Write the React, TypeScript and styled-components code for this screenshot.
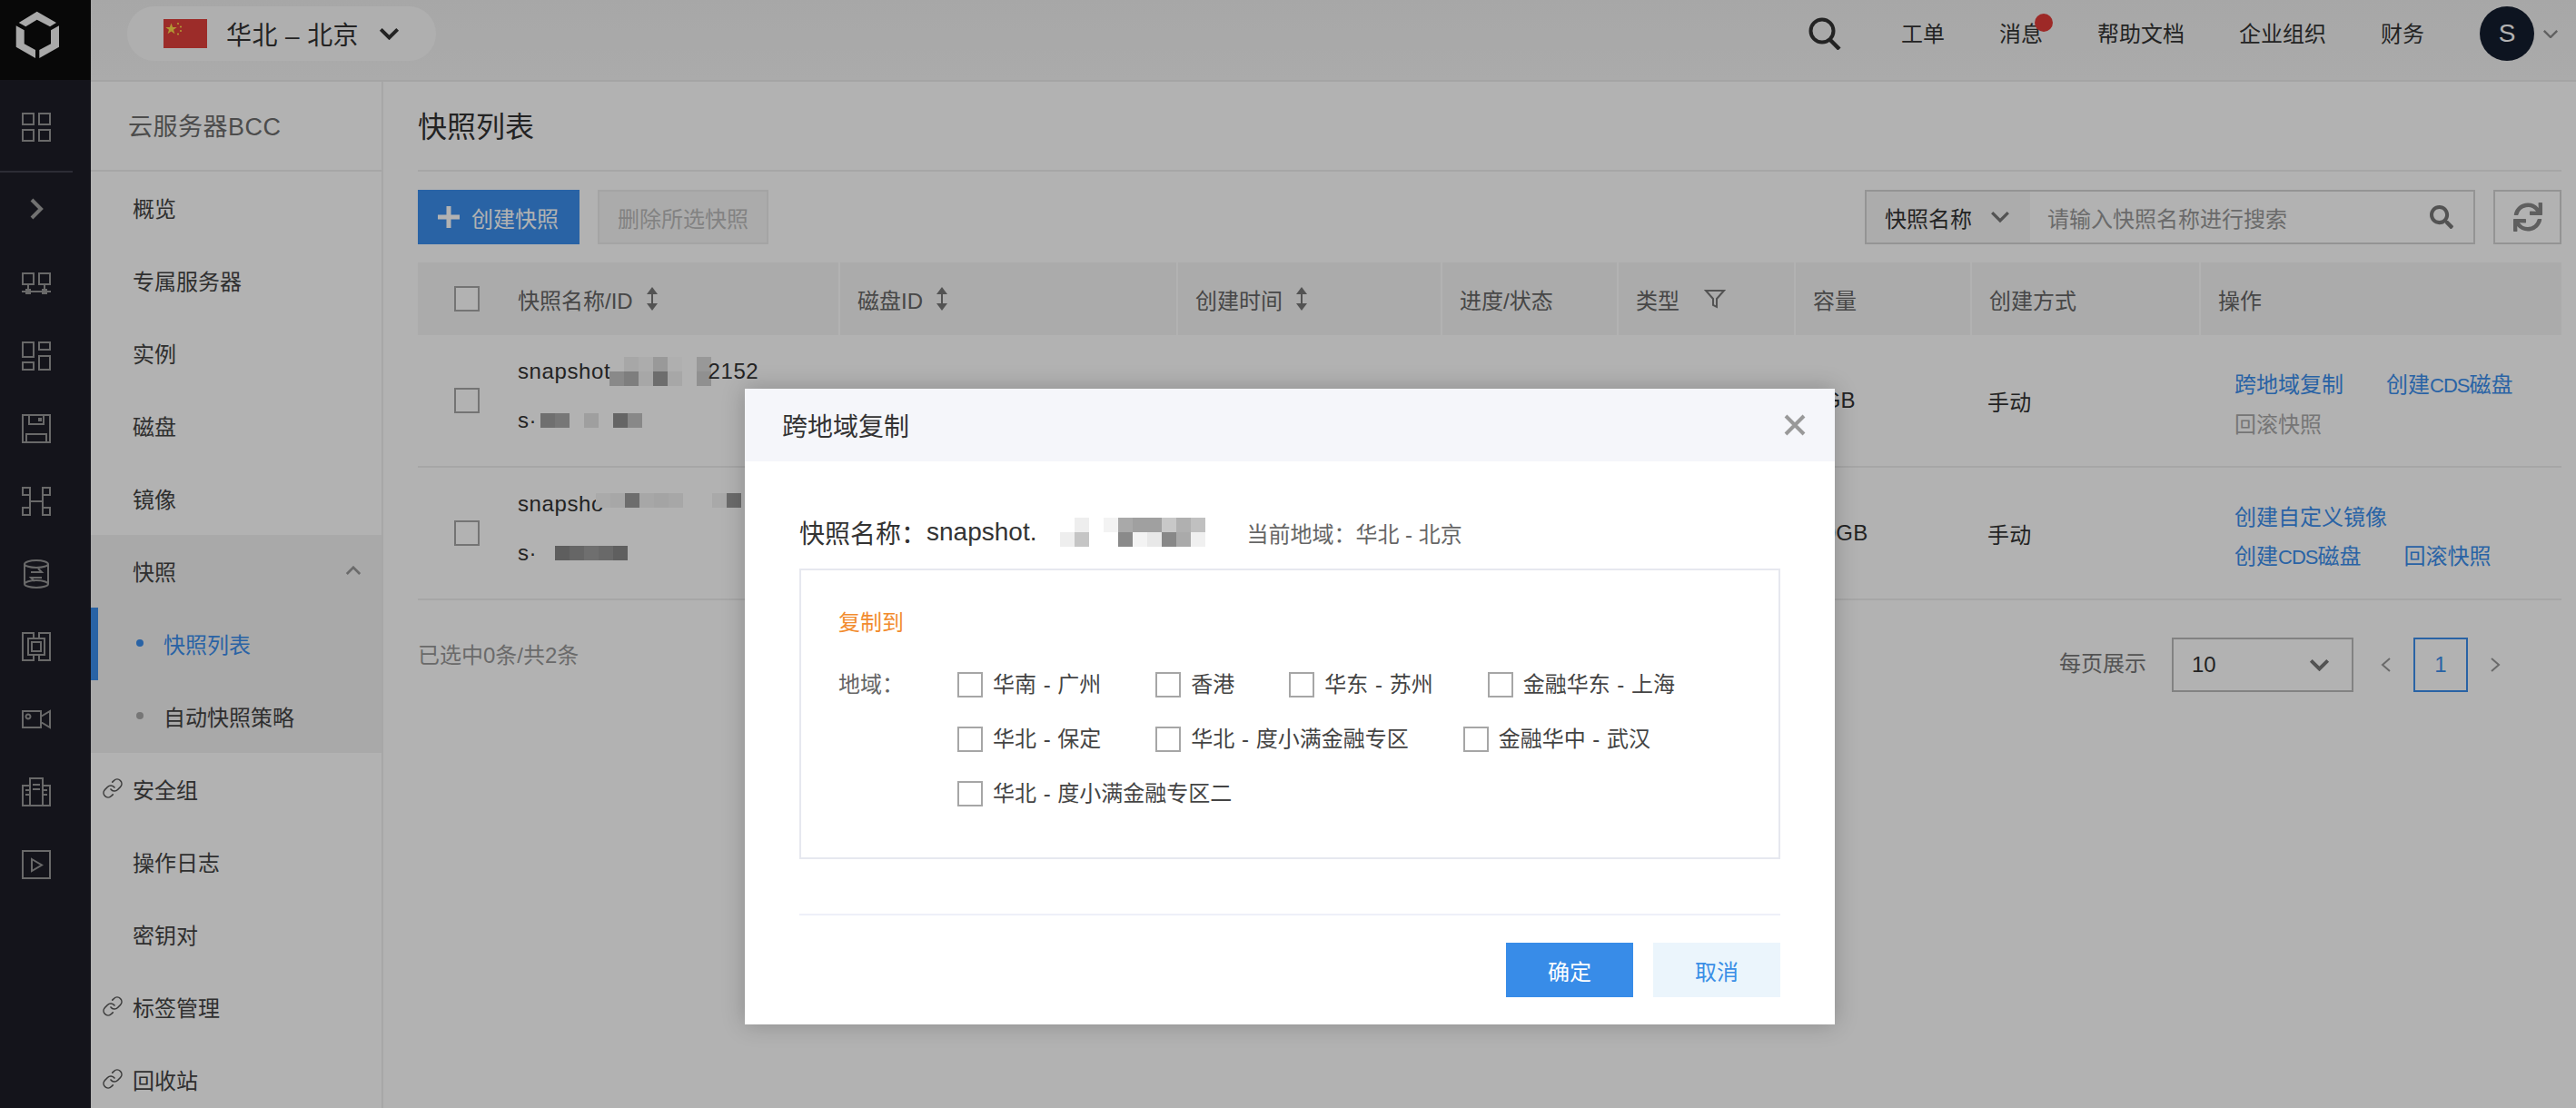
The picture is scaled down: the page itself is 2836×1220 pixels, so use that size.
import React from 'react';
import styled, { createGlobalStyle } from 'styled-components';
import { Link as LinkIcon } from 'lucide-react';
import { FaSearch, FaSync } from 'react-icons/fa';

const GlobalStyle = createGlobalStyle`
html, body {
	margin: 0;
	padding: 0;
	background: #fff;
}
* {
	box-sizing: border-box;
}
body {
	font-family: "Liberation Sans", "Noto Sans CJK SC", sans-serif;
	font-size: 24px;
	color: #333;
}
`;

const Shell = styled.div`
display: flex;
width: 2836px;
height: 1220px;
overflow: hidden;
position: relative;
`;

const Rail = styled.nav`
flex: 0 0 100px;
display: flex;
flex-flow: column nowrap;
background-color: #1e1e28;
color: #979797;
`;

const LogoCell = styled.div`
flex: 0 0 88px;
margin-bottom: 12px;
display: flex;
background-color: #0c0c0c;
`;

const RailSlot = styled.div`
flex: 0 0 80px;
width: 80px;
display: flex;
align-items: center;
justify-content: center;
`;

const RailDivider = styled.div`
flex: 0 0 2px;
width: 80px;
margin-top: 8px;
background-color: #3f3f4d;
`;

const RailGap = styled.div`
flex: 0 0 2px;
`;

const Main = styled.div`
flex: 1;
min-width: 0;
display: flex;
flex-flow: column nowrap;
`;

const TopBar = styled.header`
flex: 0 0 90px;
display: flex;
align-items: center;
padding: 0 19px 14px 40px;
background-image: linear-gradient(#f0f0f0, #f5f5f5);
border-bottom: 2px solid #ebebeb;
`;

const RegionPill = styled.div`
width: 340px;
height: 60px;
padding-left: 40px;
display: flex;
align-items: center;
border-radius: 30px;
background-color: #fbfbfb;
font-size: 28px;
color: #333;
`;

const RegionName = styled.span`
margin: 0 22px 0 21px;
letter-spacing: 0.4px;
white-space: nowrap;
`;

const TopSpacer = styled.div`
flex: 1;
`;

const TopLinks = styled.div`
display: flex;
align-items: center;
gap: 60px;
margin: -3px 0 0 66px;
color: #333;
`;

const TopLink = styled.span`
position: relative;
white-space: nowrap;
`;

const Badge = styled.i`
position: absolute;
top: -3px;
right: -11px;
width: 20px;
height: 20px;
border-radius: 50%;
background-color: #e13c38;
`;

const Avatar = styled.div`
width: 60px;
height: 60px;
margin-left: 61px;
display: flex;
align-items: center;
justify-content: center;
border-radius: 50%;
background-color: #141d2e;
color: #fff;
font-size: 28px;
`;

const AvatarCaret = styled.div`
margin-left: 9px;
display: flex;
color: #8a8a8a;
`;

const Body = styled.div`
flex: 1;
min-height: 0;
display: flex;
`;

const SideNav = styled.aside`
flex: 0 0 322px;
display: flex;
flex-flow: column nowrap;
border-right: 2px solid #f0f0f0;
background-color: #fff;
`;

const SideTitle = styled.div`
flex: 0 0 99px;
padding: 0 0 3px 41px;
display: flex;
align-items: center;
border-bottom: 2px solid #eee;
font-size: 27px;
letter-spacing: 0.5px;
color: #6e6e6e;
`;

const NavItem = styled.div<{ $open?: boolean }>`
flex: 0 0 80px;
padding: 0 0 2px 11px;
display: flex;
align-items: center;
color: #444;
background-color: ${p => (p.$open ? '#f2f2f3' : 'transparent')};
`;

const NavIconSlot = styled.span`
flex: 0 0 35px;
display: flex;
margin-left: 1px;
margin-right: -1px;
color: #555;
`;

const NavText = styled.span`
flex: 1;
`;

const NavCaret = styled.span`
margin-right: 22px;
display: flex;
color: #9a9a9a;
`;

const SubItem = styled.div<{ $active?: boolean }>`
flex: 0 0 80px;
padding: 0 0 2px 50px;
display: flex;
align-items: center;
gap: 22px;
background-color: #f2f2f3;
color: ${p => (p.$active ? '#3c8fed' : '#444')};
box-shadow: ${p => (p.$active ? 'inset 8px 0 0 #3c8fed' : 'none')};
`;

const SubDot = styled.i<{ $active?: boolean }>`
width: 8px;
height: 8px;
border-radius: 50%;
background-color: ${p => (p.$active ? '#3c8fed' : '#aaa')};
`;

const Content = styled.main`
flex: 1;
min-width: 0;
padding: 0 16px 0 38px;
display: flex;
flex-flow: column nowrap;
`;

const PageTitle = styled.h1`
margin: 0;
flex: 0 0 99px;
padding-bottom: 3px;
display: flex;
align-items: center;
border-bottom: 2px solid #eee;
font-size: 32px;
font-weight: normal;
color: #333;
`;

const Toolbar = styled.div`
margin-top: 20px;
height: 60px;
display: flex;
align-items: stretch;
gap: 20px;
`;

const PrimaryButton = styled.button`
width: 178px;
padding: 0 0 0 22px;
display: flex;
align-items: center;
gap: 13px;
border: 0;
background-color: #3c8fed;
color: #fff;
font: inherit;
`;

const GhostButton = styled.button`
width: 188px;
padding: 0;
border: 2px solid #ebebeb;
background-color: #f5f5f5;
color: #bbb;
font: inherit;
`;

const SearchBox = styled.div`
margin-left: auto;
width: 672px;
display: flex;
align-items: stretch;
border: 2px solid #d4d4d4;
`;

const SearchType = styled.div`
flex: 0 0 180px;
padding-left: 20px;
display: flex;
align-items: center;
gap: 20px;
background-color: #f6f6f6;
color: #333;
`;

const SearchInput = styled.div`
flex: 1;
padding: 0 22px 0 19px;
display: flex;
align-items: center;
justify-content: space-between;
color: #999;
`;

const SearchGlyph = styled.span`
display: flex;
color: #777;
`;

const RefreshButton = styled.div`
width: 75px;
display: flex;
align-items: center;
justify-content: center;
border: 2px solid #d4d4d4;
color: #888;
`;

const columns = '463px 372px 291px 194px 195px 194px 252px 1fr';

const HeadRow = styled.div`
margin-top: 20px;
height: 80px;
display: grid;
grid-template-columns: ${columns};
background-color: #f5f5f5;
color: #666;
`;

const HeadCell = styled.div<{ $first?: boolean }>`
padding-left: ${p => (p.$first ? '40px' : '19px')};
display: flex;
align-items: center;
border-left: ${p => (p.$first ? '0' : '2px solid #fff')};
`;

const HeadText = styled.span<{ $lead?: boolean }>`
margin-left: ${p => (p.$lead ? '42px' : '0')};
white-space: nowrap;
`;

const SortGlyph = styled.svg`
margin-left: 14px;
color: #777;
`;

const FilterGlyph = styled.svg`
margin-left: 27px;
color: #777;
`;

const Box = styled.span`
flex: 0 0 28px;
width: 28px;
height: 28px;
border: 2px solid #a6a6a6;
background-color: #fff;
`;

const TableRow = styled.div`
height: 146px;
display: grid;
grid-template-columns: ${columns};
border-bottom: 2px solid #eee;
color: #333;
`;

const NameCell = styled.div`
padding-left: 40px;
display: flex;
align-items: center;
`;

const NameStack = styled.div`
margin-left: 42px;
padding-bottom: 11px;
display: flex;
flex-flow: column nowrap;
gap: 24px;
`;

const NameLine = styled.div`
height: 30px;
display: flex;
align-items: center;
letter-spacing: 0.6px;
white-space: nowrap;
`;

const Mosaic = styled.span<{ $cols: number; $left?: number; $right?: number; $top?: number }>`
display: inline-grid;
grid-template-columns: repeat(${p => p.$cols}, 16px);
grid-auto-rows: 16px;
margin-left: ${p => p.$left ?? 0}px;
margin-right: ${p => p.$right ?? 0}px;
margin-top: ${p => p.$top ?? 0}px;
`;

const MosaicCell = styled.i<{ $c: string | null }>`
background-color: ${p => p.$c ?? 'transparent'};
`;

const PlainCell = styled.div`
padding-left: 19px;
display: flex;
align-items: center;
letter-spacing: 0.3px;
`;

const ActionCell = styled.div`
padding: 8px 20px 0 39px;
display: flex;
flex-flow: row wrap;
align-content: center;
column-gap: 47px;
line-height: 43px;
`;

const Action = styled.a<{ $off?: boolean }>`
color: ${p => (p.$off ? '#aaa' : '#3c8fed')};
white-space: nowrap;
`;

const ActionLatin = styled.span`
font-size: 22px;
letter-spacing: -1px;
`;

const Footer = styled.div`
padding: 41px 67px 0 0;
display: flex;
justify-content: space-between;
align-items: flex-start;
`;

const FooterNote = styled.div`
color: #999;
margin-top: 3px;
line-height: 34px;
`;

const Pager = styled.div`
display: flex;
align-items: center;
color: #777;
`;

const PagerLabel = styled.span`
margin: -8px 28px 0 0;
`;

const PageSize = styled.div`
width: 200px;
height: 60px;
padding: 0 24px 0 20px;
display: flex;
align-items: center;
justify-content: space-between;
border: 2px solid #bbb;
color: #333;
`;

const PageArrow = styled.span`
display: flex;
margin: 0 24px 0 30px;
color: #999;
`;

const PageArrowNext = styled(PageArrow)`
margin: 0 0 0 24px;
`;

const PageNumber = styled.div`
width: 60px;
height: 60px;
display: flex;
align-items: center;
justify-content: center;
border: 2px solid #3c8fed;
color: #3c8fed;
`;

const Overlay = styled.div`
position: absolute;
inset: 0;
background-color: rgba(0, 0, 0, 0.3);
`;

const Modal = styled.section`
position: absolute;
left: 820px;
top: 428px;
width: 1200px;
height: 700px;
display: flex;
flex-flow: column nowrap;
background-color: #fff;
box-shadow: 0 0 24px rgba(0, 0, 0, 0.22);
`;

const ModalHead = styled.header`
flex: 0 0 80px;
padding: 0 32px 0 41px;
display: flex;
align-items: center;
justify-content: space-between;
background-color: #f5f6fa;
font-size: 28px;
color: #333;
`;

const CloseGlyph = styled.svg`
color: #999;
`;

const ModalBody = styled.div`
flex: 1;
padding: 0 60px;
display: flex;
flex-flow: column nowrap;
`;

const SnapshotLine = styled.div`
margin-top: 60px;
height: 36px;
display: flex;
align-items: center;
font-size: 28px;
color: #333;
white-space: nowrap;
`;

const CurrentRegion = styled.span`
margin-left: 45px;
font-size: 24px;
color: #666;
`;

const CopyBox = styled.div`
margin-top: 22px;
height: 320px;
padding: 41px 41px 0;
border: 2px solid #e6e8ef;
`;

const CopyTitle = styled.div`
line-height: 34px;
color: #f28c2e;
`;

const RegionRow = styled.div`
margin-top: 37px;
display: flex;
`;

const RegionLabel = styled.div`
flex: 0 0 131px;
line-height: 28px;
color: #666;
`;

const RegionList = styled.div`
flex: 1;
display: flex;
flex-flow: row wrap;
gap: 32px 60px;
`;

const RegionOption = styled.label`
display: flex;
align-items: center;
gap: 11px;
line-height: 28px;
color: #444;
word-spacing: 1px;
white-space: nowrap;
`;

const ModalFoot = styled.footer`
margin-top: 60px;
padding-top: 30px;
display: flex;
justify-content: flex-end;
gap: 22px;
border-top: 2px solid #eef0f9;
`;

const DialogButton = styled.button<{ $primary?: boolean }>`
width: 140px;
height: 60px;
padding: 0;
border: 0;
font: inherit;
background-color: ${p => (p.$primary ? '#388ce8' : '#ebf5fc')};
color: ${p => (p.$primary ? '#fff' : '#3a8ee6')};
`;

const railIcons: { d: string, solid?: string }[] = [
	{ d: 'M1 5h12v12H1zM19 5h12v12H19zM7 17v8M25 17v8M0 25h32', solid: 'M4 22h6v6H4zM22 22h6v6h-6z' },
	{ d: 'M1 1h12v16H1zM19 1h12v8H19zM1 23h12v8H1zM19 16h12v15H19z' },
	{ d: 'M1 1h30v30H1zM8 1v10h16V1M5 31v-9h22v9', solid: 'M18 4h4v4h-4z' },
	{ d: 'M1 1h8v8H1zM23 1h8v8h-8zM1 23h8v8H1zM23 23h8v8h-8zM9 9v14M23 9v14M9 16h14' },
	{ d: 'M3 5a13 4 0 1 0 26 0a13 4 0 1 0-26 0zM3 27a13 4 0 1 0 26 0a13 4 0 1 0-26 0zM3 5v22M29 5v22M10 14h12l-4-4M22 20H10l4 4' },
	{ d: 'M13 1H1v30h12v-6H7V7h6zM19 1h12v30H19v-6h6V7h-6zM7 7h18M7 25h18M11 11h10v10H11z' },
	{ d: 'M1 7h20v18H1zM21 13L31 7v18L21 19zM9.5 13a2.5 2.5 0 1 1-5 0a2.5 2.5 0 1 1 5 0z' },
	{ d: 'M9 32V1h14v31M9 9H1v22h30V9h-8M12 8h8M12 13h8M4 14h5M4 19h5M23 14h5M23 19h5' },
	{ d: 'M1 1h30v30H1zM11 10l11 6.5-11 6.5z' },
];

const RailIcon = (props: { d: string, solid?: string }) => (
	<svg width="32" height="32" viewBox="0 0 32 32">
		<path d={props.d} fill="none" stroke="currentColor" strokeWidth="2"/>
		{props.solid && <path d={props.solid} fill="currentColor"/>}
	</svg>
);

const Flag = () => (
	<svg width="48" height="32" viewBox="0 0 48 32">
		<rect width="48" height="32" fill="#e0403c"/>
		<path d="M8.5 4.5l1.6 4.4h4.6l-3.7 2.8 1.4 4.5-3.9-2.7-3.9 2.7 1.4-4.5-3.7-2.8h4.6z" fill="#ffd84a"/>
		<circle cx="16" cy="5" r="1.1" fill="#ffd84a"/>
		<circle cx="19" cy="8.5" r="1.1" fill="#ffd84a"/>
		<circle cx="19" cy="13" r="1.1" fill="#ffd84a"/>
		<circle cx="16" cy="16.5" r="1.1" fill="#ffd84a"/>
	</svg>
);

const Chevron = (props: { size: number, weight: number, up?: boolean }) => (
	<svg width={props.size} height={props.size * 0.6} viewBox="0 0 20 12">
		<path d={props.up ? 'M2 10l8-8 8 8' : 'M2 2l8 8 8-8'} fill="none" stroke="currentColor" strokeWidth={props.weight}/>
	</svg>
);

const Sort = () => (
	<SortGlyph width="14" height="26" viewBox="0 0 14 26">
		<path d="M7 0l6 8H1zM7 26l-6-8h12z" fill="currentColor"/>
		<path d="M7 6v14" stroke="currentColor" strokeWidth="2"/>
	</SortGlyph>
);

const mos = (items: (string | null)[]) => items.map((c, i) => <MosaicCell key={i} $c={c}/>);

const Check = (props: { label: string }) => (
	<RegionOption><Box/>{props.label}</RegionOption>
);

const nav = ['概览', '专属服务器', '实例', '磁盘', '镜像'];
const navAfter: [string, boolean][] = [['安全组', true], ['操作日志', false], ['密钥对', false], ['标签管理', true], ['回收站', true]];
const regions = ['华南 - 广州', '香港', '华东 - 苏州', '金融华东 - 上海', '华北 - 保定', '华北 - 度小满金融专区', '金融华中 - 武汉', '华北 - 度小满金融专区二'];

export default function App() {
	return (
		<>
			<GlobalStyle/>
			<Shell>
				<Rail>
					<LogoCell>
						<svg width="100" height="88" viewBox="0 0 100 88">
							<path d="M40.7 12.7L62 25l-7 4.3-14.3-7.6-12.4 7.6-7.6-4.3zM17.7 28.3l9 5v15L39 55v9L17.7 51.7zM65 28.3l-9 5v15L43.3 55v9L65 51.7z" fill="#f2f2f2"/>
						</svg>
					</LogoCell>
					<RailSlot>
						<RailIcon d="M1 1h12v12H1zM19 1h12v12H19zM1 19h12v12H1zM19 19h12v12H19z"/>
					</RailSlot>
					<RailDivider/>
					<RailSlot>
						<svg width="16" height="24" viewBox="0 0 16 24">
							<path d="M3 2l10 10L3 22" fill="none" stroke="#a2a2a2" strokeWidth="4"/>
						</svg>
					</RailSlot>
					<RailGap/>
					{railIcons.map(icon => (
						<RailSlot key={icon.d}>
							<RailIcon d={icon.d} solid={icon.solid}/>
						</RailSlot>
					))}
				</Rail>
				<Main>
					<TopBar>
						<RegionPill>
							<Flag/>
							<RegionName>华北 – 北京</RegionName>
							<Chevron size={23} weight={3.4}/>
						</RegionPill>
						<TopSpacer/>
						<svg width="36" height="36" viewBox="0 0 36 36">
							<circle cx="15" cy="15" r="12.5" fill="none" stroke="#333" strokeWidth="4"/>
							<path d="M23 24l11 11" stroke="#333" strokeWidth="4.5"/>
						</svg>
						<TopLinks>
							<TopLink>工单</TopLink>
							<TopLink>消息<Badge/></TopLink>
							<TopLink>帮助文档</TopLink>
							<TopLink>企业组织</TopLink>
							<TopLink>财务</TopLink>
						</TopLinks>
						<Avatar>S</Avatar>
						<AvatarCaret><Chevron size={18} weight={2.6}/></AvatarCaret>
					</TopBar>
					<Body>
						<SideNav>
							<SideTitle>云服务器BCC</SideTitle>
							{nav.map(label => (
								<NavItem key={label}><NavIconSlot/><NavText>{label}</NavText></NavItem>
							))}
							<NavItem $open>
								<NavIconSlot/>
								<NavText>快照</NavText>
								<NavCaret><Chevron size={18} weight={3} up/></NavCaret>
							</NavItem>
							<SubItem $active><SubDot $active/>快照列表</SubItem>
							<SubItem><SubDot/>自动快照策略</SubItem>
							{navAfter.map(([label, linked]) => (
								<NavItem key={label}>
									<NavIconSlot>{linked && <LinkIcon size={24} strokeWidth={1.6}/>}</NavIconSlot>
									<NavText>{label}</NavText>
								</NavItem>
							))}
						</SideNav>
						<Content>
							<PageTitle>快照列表</PageTitle>
							<Toolbar>
								<PrimaryButton>
									<svg width="24" height="24" viewBox="0 0 24 24"><path d="M12 0v24M0 12h24" stroke="#fff" strokeWidth="5"/></svg>
									创建快照
								</PrimaryButton>
								<GhostButton>删除所选快照</GhostButton>
								<SearchBox>
									<SearchType>
										快照名称
										<SearchGlyph><Chevron size={22} weight={3}/></SearchGlyph>
									</SearchType>
									<SearchInput>
										请输入快照名称进行搜索
										<SearchGlyph><FaSearch size={26}/></SearchGlyph>
									</SearchInput>
								</SearchBox>
								<RefreshButton><FaSync size={32}/></RefreshButton>
							</Toolbar>
							<HeadRow>
								<HeadCell $first><Box/><HeadText $lead>快照名称/ID</HeadText><Sort/></HeadCell>
								<HeadCell><HeadText>磁盘ID</HeadText><Sort/></HeadCell>
								<HeadCell><HeadText>创建时间</HeadText><Sort/></HeadCell>
								<HeadCell><HeadText>进度/状态</HeadText></HeadCell>
								<HeadCell>
									<HeadText>类型</HeadText>
									<FilterGlyph width="24" height="24" viewBox="0 0 24 24">
										<path d="M2 3h20l-8 9v9l-4-2v-7z" fill="none" stroke="currentColor" strokeWidth="2"/>
									</FilterGlyph>
								</HeadCell>
								<HeadCell><HeadText>容量</HeadText></HeadCell>
								<HeadCell><HeadText>创建方式</HeadText></HeadCell>
								<HeadCell><HeadText>操作</HeadText></HeadCell>
							</HeadRow>
							<TableRow>
								<NameCell>
									<Box/>
									<NameStack>
										<NameLine>
											snapshot.
											<Mosaic $cols={7} $left={-8} $right={-4}>
												{mos([null, '#f0f0f0', '#f6f6f6', '#dcdcdc', '#fbfbfb', '#fff', '#dadada', '#c5c5c5', '#b5b5b5', '#f0f0f0', '#9d9d9d', '#f0f0f0', '#fff', '#cecece'])}
											</Mosaic>
											2152
										</NameLine>
										<NameLine>
											s·
											<Mosaic $cols={7} $left={4}>
												{mos(['#9f9f9f', '#ababab', null, '#e4e4e4', null, '#919191', '#c3c3c3'])}
											</Mosaic>
										</NameLine>
									</NameStack>
								</NameCell>
								<div/><div/><div/><div/>
								<PlainCell>5GB</PlainCell>
								<PlainCell>手动</PlainCell>
								<ActionCell>
									<Action>跨地域复制</Action>
									<Action>创建<ActionLatin>CDS</ActionLatin>磁盘</Action>
									<Action $off>回滚快照</Action>
								</ActionCell>
							</TableRow>
							<TableRow>
								<NameCell>
									<Box/>
									<NameStack>
										<NameLine>
											snapsho
											<Mosaic $cols={10} $left={-9} $top={-8}>
												{mos(['#f4f4f4', '#f0f0f0', '#9d9d9d', '#f0f0f0', '#ebebeb', '#f0f0f0', '#fff', '#fff', '#f2f2f2', '#9a9a9a'])}
											</Mosaic>
										</NameLine>
										<NameLine>
											s·
											<Mosaic $cols={5} $left={20}>
												{mos(['#878787', '#929292', '#a0a0a0', '#979797', '#898989'])}
											</Mosaic>
										</NameLine>
									</NameStack>
								</NameCell>
								<div/><div/><div/><div/>
								<PlainCell>50GB</PlainCell>
								<PlainCell>手动</PlainCell>
								<ActionCell>
									<Action>创建自定义镜像</Action>
									<Action>创建<ActionLatin>CDS</ActionLatin>磁盘</Action>
									<Action>回滚快照</Action>
								</ActionCell>
							</TableRow>
							<Footer>
								<FooterNote>已选中0条/共2条</FooterNote>
								<Pager>
									<PagerLabel>每页展示</PagerLabel>
									<PageSize>10<SearchGlyph><Chevron size={23} weight={3.4}/></SearchGlyph></PageSize>
									<PageArrow>
										<svg width="12" height="18" viewBox="0 0 12 18"><path d="M10 2L2 9l8 7" fill="none" stroke="currentColor" strokeWidth="2"/></svg>
									</PageArrow>
									<PageNumber>1</PageNumber>
									<PageArrowNext>
										<svg width="12" height="18" viewBox="0 0 12 18"><path d="M2 2l8 7-8 7" fill="none" stroke="currentColor" strokeWidth="2"/></svg>
									</PageArrowNext>
								</Pager>
							</Footer>
						</Content>
					</Body>
				</Main>
				<Overlay/>
				<Modal>
					<ModalHead>
						跨地域复制
						<CloseGlyph width="24" height="24" viewBox="0 0 24 24">
							<path d="M2 2l20 20M22 2L2 22" stroke="currentColor" strokeWidth="4"/>
						</CloseGlyph>
					</ModalHead>
					<ModalBody>
						<SnapshotLine>
							快照名称：
							<span>snapshot.</span>
							<Mosaic $cols={10} $left={26}>
								{mos([null, '#eee', null, '#f3f3f3', '#a9a9a9', '#a0a0a0', '#a0a0a0', '#c8c8c8', '#b0b0b0', '#c0c0c0', '#eee', '#c5c5c5', null, '#fff', '#8a8a8a', '#f3f3f3', '#e8e8e8', '#888', '#aaa', '#f0f0f0'])}
							</Mosaic>
							<CurrentRegion>当前地域：华北 - 北京</CurrentRegion>
						</SnapshotLine>
						<CopyBox>
							<CopyTitle>复制到</CopyTitle>
							<RegionRow>
								<RegionLabel>地域：</RegionLabel>
								<RegionList>
									{regions.map(r => <Check key={r} label={r}/>)}
								</RegionList>
							</RegionRow>
						</CopyBox>
						<ModalFoot>
							<DialogButton $primary>确定</DialogButton>
							<DialogButton>取消</DialogButton>
						</ModalFoot>
					</ModalBody>
				</Modal>
			</Shell>
		</>
	);
}
